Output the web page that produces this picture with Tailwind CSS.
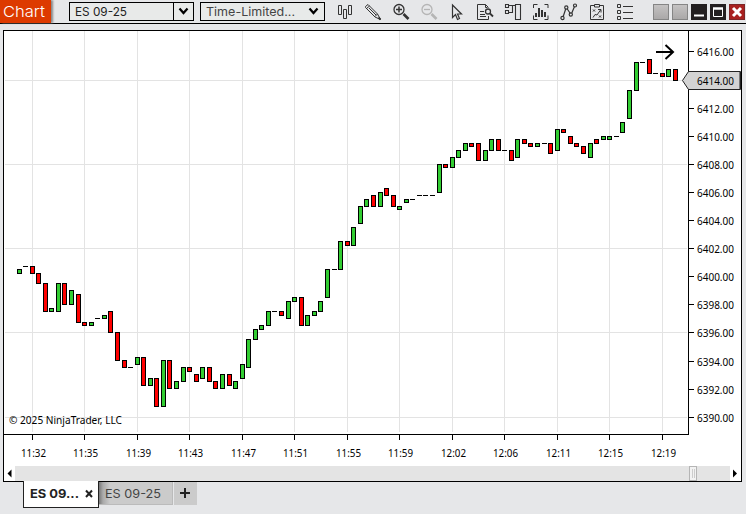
<!DOCTYPE html>
<html lang="en">
  <head>
    <meta charset="UTF-8" />
    <meta name="viewport" content="width=device-width, initial-scale=1.0" />
    <title>Chart - ES 09-25</title>
    <script src="https://cdn.jsdelivr.net/npm/@tailwindcss/browser@4"></script>
    <style>
      body {
        font-family: Inter, "Open Sans", sans-serif;
      }
      #chart text {
        font-family: "Noto Sans", "Open Sans", sans-serif;
        font-size: 11.5px;
      }
    </style>
  </head>
  <body class="w-[746px] h-[514px] overflow-hidden bg-[#e6e7e9] text-[#222]">
    <!-- title bar -->
    <header class="flex h-6 border-b border-black">
      <div class="w-[51px] h-[23px] bg-[#dd3a00] text-white shadow-[2px_0_2px_#888] pl-[3px]">
        <svg class="block" width="48" height="23" fill="#fff" font-size="15" font-weight="300">
          <text x="0" y="17" textLength="42" lengthAdjust="spacingAndGlyphs">Chart</text>
        </svg>
      </div>

      <!-- instrument and data series selectors -->
      <div class="ml-[18px] mt-[2px] w-[125px] h-[19px] border border-black bg-[#e8eae9] flex">
        <svg class="flex-1 border-r border-black" height="17" fill="#222" font-size="12">
          <text x="5" y="13" textLength="52" lengthAdjust="spacingAndGlyphs">ES 09-25</text>
        </svg>
        <svg class="w-[19px]" height="17" viewBox="0 0 19 17" fill="none" stroke="#000" stroke-width="2.2">
          <path d="M5.5 5.500l4 4.500 4-4.500" />
        </svg>
      </div>
      <div class="ml-[6px] mt-[2px] w-[125px] h-[19px] border border-black bg-[#e8eae9] flex">
        <svg class="flex-1" height="17" fill="#444" font-size="12">
          <text x="5" y="13" textLength="89" lengthAdjust="spacingAndGlyphs">Time-Limited...</text>
        </svg>
        <svg class="w-[19px]" height="17" viewBox="0 0 19 17" fill="none" stroke="#000" stroke-width="2.2">
          <path d="M4.5 5.500l4 4.500 4-4.500" />
        </svg>
      </div>

      <!-- toolbar icons -->
      <div class="ml-[6px] mt-[3px] h-[18px] grid grid-cols-[repeat(11,28px)] justify-items-center text-[#333]">
        <!-- chart style -->
        <svg width="18" height="18" fill="none" stroke="currentColor">
          <path d="M2.5 2.5h3v9h-3zM7.500 6.500h3v9h-3zM12.500 2.500h3v9h-3z" />
        </svg>
        <!-- drawing tools -->
        <svg width="18" height="18" fill="none" stroke="currentColor">
          <path d="M1.500 3.500l2.500-2 9.500 9.500 3 5.500-5.500-2.500-9.500-9.500zM2.500 5.500l3-2.500M5 5l7 7M11 13.500l2.500-2.500" />
          <path d="M14.500 14.500l2 2" stroke-width="1.800" />
        </svg>
        <!-- zoom in -->
        <svg width="18" height="18" fill="none" stroke="currentColor">
          <circle cx="7" cy="6.500" r="5" stroke-width="1.300" />
          <path d="M4 6.500h6M7 3.500v6" stroke-width="1.500" />
          <path d="M11.500 11l5 5" stroke-width="2.600" />
        </svg>
        <!-- zoom out -->
        <svg width="18" height="18" fill="none" stroke="#b5b5b5">
          <circle cx="7" cy="6.500" r="5" stroke-width="1.300" />
          <path d="M4 6.500h6" stroke-width="1.300" />
          <path d="M11.500 11l5 5" stroke-width="2.600" />
        </svg>
        <!-- cursor -->
        <svg width="18" height="18" fill="none" stroke="currentColor" stroke-width="1.200">
          <path d="M4.500 2v12.500l3-3 2 5 2-1-2-4.500h4z" />
        </svg>
        <!-- data box -->
        <svg width="18" height="18" fill="none" stroke="currentColor">
          <path d="M12.500 13v3.500h-11v-15h8l3 3M9.500 1.500v3h2M4 8.500h4M4 11.500h5M4 13.500h6" />
          <circle cx="12" cy="8.500" r="2.500" stroke-width="1.300" />
          <path d="M14 10.500l3 3" stroke-width="1.800" />
        </svg>
        <!-- chart trader -->
        <svg width="18" height="18" fill="none" stroke="currentColor">
          <path d="M1.500 1.500h3v3h-3zM1.500 7.500h3v3h-3zM5 2.500h6.500M5 9.500h3.500v-6.500M11.500 1.500h5v15h-5z" stroke-width="1.100" />
        </svg>
        <!-- indicators -->
        <svg width="18" height="18" fill="none" stroke="currentColor">
          <path d="M1.500 5v-3.500h4M12.500 1.500h3.500v3.500M1.500 12.500v4h4M12.500 16.500h3.500v-4" />
          <path d="M4 14v-4M7 14v-9M10 14v-7M13 14v-5" stroke-width="2" />
        </svg>
        <!-- strategies -->
        <svg width="18" height="18" fill="none" stroke="currentColor" stroke-width="1.200">
          <path d="M3.200 13.500l2.500-7.500M7.300 6l3 4.500M11.800 10l2.700-6.500" />
          <circle cx="2.500" cy="15" r="1.600" />
          <circle cx="6.300" cy="4.500" r="1.600" />
          <circle cx="10.800" cy="11.500" r="1.600" />
          <circle cx="15" cy="2.500" r="1.500" />
        </svg>
        <!-- strategy playbook -->
        <svg width="18" height="18" fill="none" stroke="currentColor">
          <path d="M6 2.500h-3.500v14h13v-14h-3.500M6.500 1.500h5v2.500h-5z" />
          <path d="M5 6.500l2 2M7 6.500l-2 2M11 12.500l2 2M13 12.500l-2 2M5 14.500l2-3 2 .5 3.500-5M10 6.500h3v3" />
        </svg>
        <!-- properties -->
        <svg width="18" height="18" fill="none" stroke="currentColor">
          <path d="M1.500 1.500h3v3h-3zM1.500 7.500h3v3h-3zM1.500 13.500h3v3h-3zM7 3.500h10M7 9.500h10M7 15.500h10" />
        </svg>
      </div>

      <!-- window buttons -->
      <div class="ml-[14px] mt-1 flex gap-[3px]">
        <div class="size-4 border border-[#858585] bg-gradient-to-b from-[#c4c2c2] to-[#aaa8a8]"></div>
        <div class="size-4 border border-[#858585] bg-gradient-to-b from-[#c4c2c2] to-[#aaa8a8]"></div>
        <svg class="bg-[#231f20]" width="16" height="16"><path d="M3 10.500h10v2h-10z" fill="#fff" /></svg>
        <svg class="bg-[#231f20]" width="16" height="16" fill="none" stroke="#fff">
          <path d="M3.500 4v8.500h9v-8.500" />
          <path d="M3 4.500h10" stroke-width="2.500" />
        </svg>
        <svg class="bg-[#a8201f] border border-[#7d2526]" width="16" height="16" viewBox="1 1 14 14" stroke="#fff" stroke-width="3">
          <path d="M4 4l8 8M12 4l-8 8" />
        </svg>
      </div>
    </header>

    <!-- chart panel -->
    <main class="mt-[6px] ml-[3px] w-[739px] h-[452px] border border-black bg-white flex flex-col">
      <svg id="chart" class="block" width="737" height="435" viewBox="4 31 737 435"></svg>
      <!-- scroll bar -->
      <div class="h-[15px] bg-[#e4e4e4] flex">
        <svg class="bg-white" width="11" height="15"><path d="M3.500 7.500l4-4v8z" /></svg>
        <div class="ml-[674px] w-2 border border-[#b5b5b5] bg-[#f2f2f2] flex justify-center gap-[1px] py-[2px]">
          <div class="w-px bg-[#ccc]"></div>
          <div class="w-px bg-[#ccc]"></div>
        </div>
        <svg class="ml-[33px] bg-white" width="11" height="15"><path d="M3 3.500v8l4-4z" /></svg>
      </div>
    </main>

    <!-- tabs -->
    <nav class="relative -mt-px ml-[23px] flex items-start">
      <div class="w-[76px] h-[27px] bg-white border border-t-0 border-[#222]">
        <svg class="block" width="74" height="26" fill="#222">
          <text x="6" y="17" textLength="49" lengthAdjust="spacingAndGlyphs" font-size="12" font-weight="700">ES 09...</text>
          <path d="M62 9.500l6 6.500M68 9.500l-6 6.500" stroke="#222" stroke-width="2" />
        </svg>
      </div>
      <div class="mt-px w-[74px] h-[23px] border-r border-b border-[#bbb] bg-[linear-gradient(90deg,#777_0,#aaa_4px,#cbcbcb_11px)]">
        <svg class="block" width="73" height="22" fill="#444">
          <text x="6" y="16" textLength="56" lengthAdjust="spacingAndGlyphs" font-size="12">ES 09-25</text>
        </svg>
      </div>
      <svg class="mt-px ml-px bg-[#cbcbcb]" width="23" height="23" stroke="#222" stroke-width="2">
        <path d="M6 11h10M11 6v10" />
      </svg>
    </nav>

    <script>
      const chart = document.getElementById("chart");

      // one entry per bar: [top, bottom, direction], a single number is a doji
      const bars = [
        [269, 274, "u"], 266, [266, 274, "d"], [273, 284, "d"], [283, 312, "d"],
        [308, 312, "u"], [283, 312, "u"], [283, 305, "d"], [290, 305, "u"], [294, 323, "d"],
        [322, 326, "d"], [322, 326, "u"], 318, [315, 319, "u"], [311, 333, "d"],
        [332, 361, "d"], [360, 368, "d"], 367, [357, 365, "u"], [357, 386, "d"],
        [378, 386, "u"], [378, 407, "d"], [360, 407, "u"], [360, 389, "d"], [381, 389, "u"],
        [367, 382, "u"], [367, 372, "d"], [374, 382, "d"], [367, 379, "u"], [367, 382, "d"],
        [381, 389, "d"], [374, 389, "u"], [374, 386, "d"], [381, 389, "u"], [364, 379, "u"],
        [339, 368, "u"], [329, 340, "u"], [325, 330, "u"], [311, 326, "u"], 311,
        [311, 316, "d"], [301, 319, "u"], [297, 302, "u"], [297, 326, "d"], [315, 326, "u"],
        [311, 316, "u"], [301, 312, "u"], [269, 298, "u"], 269, [241, 270, "u"],
        [241, 246, "d"], [227, 246, "u"], [206, 224, "u"], [199, 207, "u"], [195, 207, "d"],
        [192, 207, "u"], [188, 196, "d"], [195, 207, "d"], [206, 210, "u"], [199, 203, "u"],
        199, 195, 195, 195, [164, 193, "u"],
        [164, 168, "d"], [157, 168, "u"], [150, 158, "u"], [143, 151, "u"], [143, 147, "d"],
        [143, 161, "d"], [150, 161, "u"], [139, 151, "u"], [139, 151, "d"], 150,
        [150, 161, "d"], [139, 158, "u"], [139, 144, "d"], [143, 147, "d"], [143, 147, "u"],
        143, [143, 154, "d"], [129, 151, "u"], [129, 133, "d"], [136, 144, "d"],
        [143, 147, "d"], [146, 154, "d"], [143, 158, "u"], [139, 144, "d"], [136, 140, "u"],
        [136, 140, "u"], 136, [122, 133, "u"], [90, 119, "u"], [62, 91, "u"],
        62, [59, 74, "d"], 73, [73, 77, "d"], [69, 77, "u"], [69, 81, "d"],
      ];
      const times = ["11:32", "11:35", "11:39", "11:43", "11:47", "11:51", "11:55", "11:59", "12:02", "12:06", "12:11", "12:15", "12:19"];

      let out = "";

      // grid, x axis
      times.forEach(function (time, i) {
        const x = Math.floor(32 + i * 52.5);
        out += `<rect x="${x}" y="31" width="1" height="401" fill="#e3e3e3" />`;
        out += `<rect x="${x}" y="434" width="1" height="6" />`;
        out += `<text x="${x - 11}" y="457" textLength="25" lengthAdjust="spacingAndGlyphs">${time}</text>`;
      });
      [80, 164, 248, 332, 417].forEach(function (y) {
        out += `<rect x="5" y="${y}" width="682" height="1" fill="#e3e3e3" />`;
      });

      // candles
      bars.forEach(function (bar, i) {
        const x = Math.floor(17 + i * 6.564);
        if (typeof bar === "number") {
          out += `<rect x="${x}" y="${bar}" width="5" height="1" />`;
          return;
        }
        const fill = bar[2] === "u" ? "#32cd32" : "#ff0000";
        out += `<rect x="${x + 0.5}" y="${bar[0] + 0.5}" width="4" height="${bar[1] - bar[0] - 1}" fill="${fill}" stroke="#000" />`;
      });

      // axis lines and last price marker
      out += `<rect x="688" y="31" width="1" height="404" /><rect x="4" y="434" width="685" height="1" />`;
      out += `<path d="M682.500 80.500l6-9h52v18h-52z" fill="#d3d3d3" stroke="#222" /><path d="M739.500 72v17" stroke="#777" />`;
      out += `<path d="M656 52h17M665.500 45l7.500 7-7.500 7" fill="none" stroke="#000" stroke-width="2" />`;

      // y axis
      for (let price = 6390; price <= 6416; price += 2) {
        const y = Math.round(416.7 - (price - 6390) * 14.048);
        if (price !== 6414) out += `<rect x="689" y="${y}" width="5" height="1" />`;
        out += `<text x="697" y="${y + 5}" textLength="37" lengthAdjust="spacingAndGlyphs">${price}.00</text>`;
      }
      out += `<text x="9" y="424" textLength="113" lengthAdjust="spacingAndGlyphs">© 2025 NinjaTrader, LLC</text>`;

      chart.innerHTML = out;
    </script>
  </body>
</html>
